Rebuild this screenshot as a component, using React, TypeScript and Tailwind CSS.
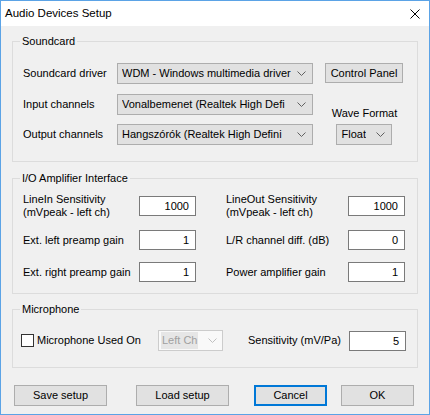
import React from "react";

function Chevron({ color = "#606060" }: { color?: string }) {
  return (
    <svg width="9" height="5" viewBox="0 0 9 5" className="shrink-0">
      <polyline points="0.5,0.5 4.5,4.5 8.5,0.5" fill="none" stroke={color} strokeWidth="1" />
    </svg>
  );
}

function Combo({ text, className }: { text: string; className: string }) {
  return (
    <div
      className={
        "flex items-center justify-between border border-[#adadad] bg-[#e1e1e1] pl-[4px] pr-[6px] overflow-hidden " +
        className
      }
    >
      <span className="whitespace-nowrap overflow-hidden">{text}</span>
      <Chevron />
    </div>
  );
}

function Edit({ value }: { value: string }) {
  return (
    <div className="w-[57px] h-[20px] border border-[#7a7a7a] bg-white text-right pr-[6px] leading-[18px] shrink-0">
      {value}
    </div>
  );
}

function Button({ children, className }: { children: React.ReactNode; className: string }) {
  return (
    <button
      type="button"
      className={"flex items-center justify-center bg-[#e1e1e1] " + className}
    >
      {children}
    </button>
  );
}

function SoundRow({ label, value, className = "" }: { label: string; value: string; className?: string }) {
  return (
    <div className={"flex items-center h-[21px] " + className}>
      <span className="w-[94px] shrink-0">{label}</span>
      <Combo text={value} className="w-[196px] h-[21px]" />
    </div>
  );
}

function AmpRow({ label, value, className }: { label: React.ReactNode; value: string; className: string }) {
  return (
    <div className={"flex items-center justify-between " + className}>
      <span className="leading-[13px]">{label}</span>
      <Edit value={value} />
    </div>
  );
}

export default function App() {
  return (
    <div className="w-[430px] h-[415px] border border-[#5ba3e6] bg-[#f0f0f0] font-['Liberation_Sans',Arial,sans-serif] text-[11px] text-black flex flex-col overflow-hidden">
      {/* title bar */}
      <div className="h-[25px] bg-white flex items-center justify-between pl-[4px] pr-[9px] shrink-0">
        <span className="text-[11.5px]">Audio Devices Setup</span>
        <svg width="10" height="10" viewBox="0 0 10 10">
          <path d="M0.5 0.5L9.5 9.5M9.5 0.5L0.5 9.5" stroke="#000" strokeWidth="1" />
        </svg>
      </div>

      <div className="px-[11px] pt-[8px] flex flex-col">
        {/* Soundcard */}
        <fieldset className="border border-[#dcdcdc] h-[128px] min-w-0">
          <legend className="ml-[7px] px-[2px] leading-[14px]">Soundcard</legend>
          <div className="flex pl-[10px] pt-[15px]">
            <div className="flex flex-col">
              <SoundRow label="Soundcard driver" value="WDM - Windows multimedia driver" />
              <SoundRow label="Input channels" value="Vonalbemenet (Realtek High Defi" className="mt-[10px]" />
              <SoundRow label="Output channels" value="Hangszórók (Realtek High Defini" className="mt-[9px]" />
            </div>
            <div className="ml-[12px] w-[78px] flex flex-col items-center justify-between">
              <Button className="w-[78px] h-[20px] border border-[#adadad]">Control Panel</Button>
              <div className="flex flex-col items-center pl-[1px]">
                <span className="leading-[13px] mb-[4px]">Wave Format</span>
                <Combo text="Float" className="w-[56px] h-[21px]" />
              </div>
            </div>
          </div>
        </fieldset>

        {/* I/O Amplifier Interface */}
        <fieldset className="border border-[#dcdcdc] h-[123px] mt-[9px] min-w-0">
          <legend className="ml-[7px] px-[2px] leading-[14px]">I/O Amplifier Interface</legend>
          <div className="flex pl-[10px] pt-[8px]">
            <div className="w-[173px] flex flex-col">
              <AmpRow
                label={<>LineIn Sensitivity<br />(mVpeak - left ch)</>}
                value="1000"
                className="h-[26px]"
              />
              <AmpRow label="Ext. left preamp gain" value="1" className="h-[20px] mt-[11px]" />
              <AmpRow label="Ext. right preamp gain" value="1" className="h-[20px] mt-[12px]" />
            </div>
            <div className="ml-[30px] w-[179px] flex flex-col">
              <AmpRow
                label={<>LineOut Sensitivity<br />(mVpeak - left ch)</>}
                value="1000"
                className="h-[26px]"
              />
              <AmpRow label="L/R channel diff. (dB)" value="0" className="h-[20px] mt-[11px]" />
              <AmpRow label="Power amplifier gain" value="1" className="h-[20px] mt-[12px]" />
            </div>
          </div>
        </fieldset>

        {/* Microphone */}
        <fieldset className="border border-[#dcdcdc] h-[66px] mt-[8px] min-w-0">
          <legend className="ml-[7px] px-[2px] leading-[14px]">Microphone</legend>
          <div className="flex items-center h-[21px] pl-[8px] mt-[14px]">
            <div className="w-[13px] h-[13px] border border-[#333333] bg-white shrink-0" />
            <span className="ml-[3px] w-[121px] shrink-0">Microphone Used On</span>
            <div className="w-[65px] h-[21px] border border-[#cccccc] bg-[#f9f9f9] flex items-center justify-between pl-[2px] pr-[5px] shrink-0">
              <span className="bg-[#e6e6e6] text-[#a0a0a0] px-[1px] leading-[17px] whitespace-nowrap shrink-0">
                Left Ch
              </span>
              <Chevron color="#c0c0c0" />
            </div>
            <span className="ml-[25px] w-[101px] shrink-0">Sensitivity (mV/Pa)</span>
            <Edit value="5" />
          </div>
        </fieldset>

        {/* bottom buttons */}
        <div className="flex mt-[17px] pl-[2px]">
          <Button className="w-[93px] h-[21px] border border-[#adadad]">Save setup</Button>
          <Button className="w-[93px] h-[21px] border border-[#adadad] ml-[29px]">Load setup</Button>
          <Button className="w-[73px] h-[21px] border-2 border-[#0078d7] ml-[25px]">Cancel</Button>
          <Button className="w-[73px] h-[21px] border border-[#adadad] ml-[14px]">OK</Button>
        </div>
      </div>
    </div>
  );
}
